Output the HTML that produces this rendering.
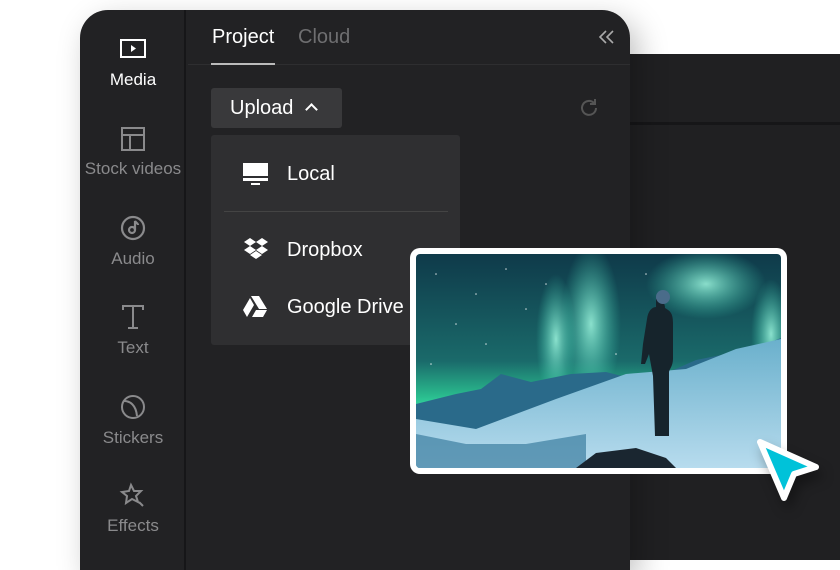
<!DOCTYPE html>
<html><head><style>
*{margin:0;padding:0;box-sizing:border-box}
body{width:840px;height:560px;background:#fff;position:relative;overflow:hidden;font-family:"Liberation Sans",sans-serif}
.right{position:absolute;left:600px;top:54px;width:240px;height:506px;background:#202022}
.right .line{position:absolute;left:0;top:68px;width:240px;height:3px;background:#161618}
.panel{position:absolute;left:80px;top:10px;width:550px;height:560px;background:#222224;border-radius:28px 28px 0 0;box-shadow:8px 10px 30px rgba(0,0,0,.25)}
.side{position:absolute;left:0;top:0;width:106px;height:100%;border-right:2px solid #161618}
.item{position:absolute;left:0;width:106px;text-align:center;font-size:17px;color:#8a8a8c}
.item svg{display:block;margin:0 auto 6px}
.tab{position:absolute;top:16px;font-size:20px}
.tabline{position:absolute;left:108px;top:54px;width:442px;height:1px;background:#2e2e30}
.ul{position:absolute;left:131px;top:53px;width:64px;height:2px;background:#bbb}
.btn{position:absolute;left:131px;top:78px;width:131px;height:40px;background:#39393b;border-radius:3px;color:#fff;font-size:20px;padding:9px 0 0 19px}
.dd{position:absolute;left:131px;top:125px;width:249px;height:210px;background:#2f2f31;border-radius:3px}
.dd .r{position:absolute;left:76px;color:#fff;font-size:20px}
.dd .d{position:absolute;left:13px;top:76px;width:224px;height:1px;background:#444}
.card{position:absolute;left:410px;top:248px;width:377px;height:226px;background:#fff;border-radius:10px;padding:6px}
</style></head><body>
<div class="right"><div class="line"></div></div>
<div class="panel">
 <div class="side">
  <div class="item" style="top:29px;color:#fff"><svg width="26" height="20" viewBox="0 0 26 20" style="margin-bottom:11px"><rect x="1" y="1" width="24" height="17" fill="none" stroke="#fff" stroke-width="2"/><path d="M11 6v7l5-3.5z" fill="#fff"/></svg>Media</div>
  <div class="item" style="top:117px"><svg width="24" height="24" viewBox="0 0 24 24" fill="none" stroke="#8a8a8c" stroke-width="2" style="margin-bottom:8px"><rect x="1" y="1" width="22" height="22"/><path d="M1 8h22M9 8v15"/></svg>Stock videos</div>
  <div class="item" style="top:205px"><svg width="26" height="26" viewBox="0 0 26 26" fill="none" stroke="#8a8a8c" stroke-width="2.2" style="margin-bottom:8px"><circle cx="13" cy="13" r="11"/><circle cx="12" cy="15" r="3"/><path d="M15 15V6c1 2 3 2 3 4"/></svg>Audio</div>
  <div class="item" style="top:294px"><svg width="24" height="26" viewBox="0 0 24 26" fill="none" stroke="#8a8a8c" stroke-width="2" style="margin-bottom:8px"><path d="M2 6V2h20v4M12 2v22M7 24h10"/></svg>Text</div>
  <div class="item" style="top:384px"><svg width="26" height="26" viewBox="0 0 26 26" fill="none" stroke="#8a8a8c" stroke-width="2" style="margin-bottom:8px"><circle cx="13" cy="13" r="11"/><path d="M4 7c6 0 12 4 13 15"/></svg>Stickers</div>
  <div class="item" style="top:472px"><svg width="28" height="28" viewBox="0 0 28 28" fill="none" stroke="#8a8a8c" stroke-width="2" style="margin-bottom:6px"><path d="M12 3l3 6 7 0-5 5 2 6-6-3-6 4 1-7-5-4 7-1z"/><path d="M20 20l4 4"/></svg>Effects</div>
 </div>
 <div class="tab" style="left:132px;color:#fff">Project</div>
 <div class="tab" style="left:218px;color:#6e6e70">Cloud</div>
 <svg style="position:absolute;left:518px;top:19px" width="18" height="16" viewBox="0 0 18 16" fill="none" stroke="#aaa" stroke-width="1.6"><path d="M8 2l-6 6 6 6M15 2l-6 6 6 6"/></svg>
 <div class="tabline"></div><div class="ul"></div>
 <svg style="position:absolute;left:498px;top:87px" width="22" height="22" viewBox="0 0 22 22" fill="none" stroke="#555" stroke-width="2"><path d="M18 11a7 7 0 1 1-2-5"/><path d="M17 2v5h-5" /></svg>
 <div class="btn">Upload <span style="display:inline-block;width:9px;height:9px;border-left:2px solid #fff;border-top:2px solid #fff;transform:rotate(45deg);margin-left:8px;position:relative;top:0px"></span></div>
 <div class="dd">
  <svg style="position:absolute;left:32px;top:28px" width="25" height="22" viewBox="0 0 25 22"><rect x="0" y="0" width="25" height="13" fill="#fff"/><rect x="0" y="15" width="25" height="3" fill="#fff"/><rect x="8" y="20" width="9" height="2" fill="#fff"/></svg>
  <div class="r" style="top:28px">Local</div>
  <div class="d"></div>
  <svg style="position:absolute;left:32px;top:103px" width="26" height="22" viewBox="0 0 26 22" fill="#fff"><path d="M7 0l6 4-6 4-6-4zM19 0l6 4-6 4-6-4zM7 8l6 4-6 4-6-4zM19 8l6 4-6 4-6-4zM13 13l6 4-6 4-6-4z"/></svg>
  <div class="r" style="top:104px">Dropbox</div>
  <svg style="position:absolute;left:32px;top:161px" width="24" height="21" viewBox="0 0 24 21" fill="#fff"><path d="M8 0h8l8 13h-8zM7 2l4 7-7 12-4-7zM9 21l4-7h11l-4 7z"/></svg>
  <div class="r" style="top:161px">Google Drive</div>
 </div>
</div>
<div class="card">
<svg width="365" height="214" viewBox="0 0 365 214" style="display:block;border-radius:4px">
<defs>
<linearGradient id="sky" x1="0" y1="0" x2="0" y2="1"><stop offset="0" stop-color="#0f3a4a"/><stop offset=".5" stop-color="#1a6a6a"/><stop offset=".72" stop-color="#2fd79a"/><stop offset="1" stop-color="#1a8a8a"/></linearGradient>
<radialGradient id="a1" cx=".5" cy=".5" r=".5"><stop offset="0" stop-color="#9ff8e0" stop-opacity=".85"/><stop offset="1" stop-color="#3ad0b0" stop-opacity="0"/></radialGradient>
<linearGradient id="snow" x1="0" y1="0" x2="0" y2="1"><stop offset="0" stop-color="#6ab0cc"/><stop offset="1" stop-color="#b8dcee"/></linearGradient>
</defs>
<rect width="365" height="214" fill="url(#sky)"/>
<ellipse cx="175" cy="70" rx="30" ry="80" fill="url(#a1)"/>
<ellipse cx="140" cy="85" rx="20" ry="65" fill="url(#a1)"/>
<ellipse cx="290" cy="30" rx="60" ry="35" fill="url(#a1)"/>
<ellipse cx="355" cy="80" rx="20" ry="55" fill="url(#a1)"/>
<ellipse cx="40" cy="170" rx="90" ry="30" fill="url(#a1)" opacity=".6"/>
<g fill="#fff" opacity=".8"><circle cx="20" cy="20" r=".8"/><circle cx="60" cy="40" r=".8"/><circle cx="90" cy="15" r=".8"/><circle cx="40" cy="70" r=".8"/><circle cx="110" cy="55" r=".8"/><circle cx="70" cy="90" r=".8"/><circle cx="130" cy="30" r=".8"/><circle cx="200" cy="100" r=".8"/><circle cx="230" cy="20" r=".8"/><circle cx="15" cy="110" r=".8"/></g>
<path d="M0 150l40-10 25-5 20-15 30 8 40-8 35-2 40 10 50-22 60-12 45-18v150H0z" fill="#2a6a8a"/>
<path d="M0 165l60 10 80-30 70-25 60-5 50-20 45-10v130H0z" fill="url(#snow)"/>
<path d="M0 180l50 10 60 0 60-10v34H0z" fill="#3c7ea0" opacity=".7"/>
<path d="M160 214l20-15 40-5 30 10 10 10z" fill="#1a2630"/>
<path d="M240 45c6 0 9 4 9 9 5 3 8 5 8 15v35c0 8-3 10-4 14v64h-14l-2-60-4-22-4 10-4 0 2-20 4-25c1-8 5-12 9-12z" fill="#16242c"/>
<circle cx="247" cy="43" r="7" fill="#4a6c8a"/>
</svg>
</div>
<svg style="position:absolute;left:750px;top:436px;filter:drop-shadow(4px 8px 6px rgba(0,0,0,.35))" width="72" height="68" viewBox="0 0 72 68"><path d="M10 6l56 25-22 7-10 24z" fill="#00c2d9" stroke="#fff" stroke-width="6" stroke-linejoin="round"/></svg>
</body></html>
